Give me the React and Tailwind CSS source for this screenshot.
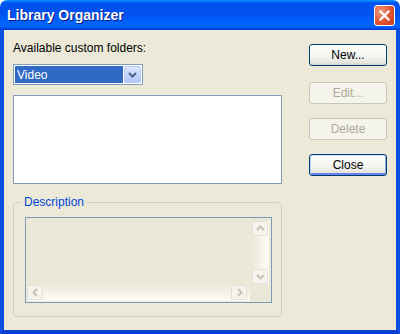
const font = "font-['Liberation_Sans',Arial,sans-serif]";

function Chevron({ dir, color = "#c5c2b2" }) {
  const paths = {
    up: "M2 7 L5.5 3.5 L9 7",
    down: "M2 4 L5.5 7.5 L9 4",
    left: "M7 2 L3.5 5.5 L7 9",
    right: "M4 2 L7.5 5.5 L4 9",
  };
  return (
    <svg width="11" height="11" viewBox="0 0 11 11">
      <path d={paths[dir]} fill="none" stroke={color} strokeWidth="2" />
    </svg>
  );
}

function ScrollButton({ dir }) {
  return (
    <div className="grid h-[15px] w-[16px] shrink-0 place-items-center rounded-[2px] border border-[#e3e1d6] bg-[#f4f3ee]">
      <Chevron dir={dir} />
    </div>
  );
}

function XpButton({ label, disabled, isDefault, className = "" }) {
  if (disabled) {
    return (
      <div
        className={`flex h-[22px] w-[78px] items-center justify-center rounded-[3px] border border-[#c9c7ba] bg-[#f5f4ea] text-[12px] text-[#aca899] ${className}`}
      >
        {label}
      </div>
    );
  }
  return (
    <div
      className={`flex h-[22px] w-[78px] items-center justify-center rounded-[3px] border border-[#003c74] bg-[linear-gradient(to_bottom,#ffffff,#f3f3ef_60%,#e6e5dd_88%,#d6d0c5)] text-[12px] text-black ${
        isDefault ? "shadow-[inset_0_1px_0_#cee7ff,inset_1px_0_0_#bcd4f6,inset_-1px_0_0_#89ade4,inset_0_-2px_0_#6982ee]" : ""
      } ${className}`}
    >
      {label}
    </div>
  );
}

export default function App() {
  return (
    <div className={`flex h-[334px] w-[400px] flex-col ${font}`}>
      {/* title bar */}
      <div className="flex h-[30px] shrink-0 items-center justify-between rounded-t-[7px] bg-[linear-gradient(to_bottom,#0997ff,#0053ee_10%,#0050ee_40%,#0066ff_85%,#005bff_92%,#003dd7_97%,#003dd7)] pl-[7px] pr-[5px]">
        <span className="mt-[1px] text-[14px] font-bold text-white [text-shadow:1px_1px_0_#0a1883]">
          Library Organizer
        </span>
        <div className="grid h-[21px] w-[21px] place-items-center rounded-[3px] border border-white bg-[radial-gradient(circle_at_30%_30%,#f09a83,#e0552f_55%,#c23c1c)]">
          <svg width="11" height="11" viewBox="0 0 11 11">
            <path d="M1.5 1.5 L9.5 9.5 M9.5 1.5 L1.5 9.5" stroke="white" strokeWidth="2.2" strokeLinecap="square" />
          </svg>
        </div>
      </div>

      {/* client */}
      <div className="flex flex-1 border-x-4 border-b-4 border-x-[#0a50e2] border-b-[#0a3fd0] bg-[#ece9d8]">
        <div className="ml-[9px] flex w-[269px] flex-col pt-[11px]">
          <div className="h-[14px] text-[12px] leading-[14px] text-black">Available custom folders:</div>

          <div className="mt-[9px] flex h-[21px] w-[130px] border border-[#7f9db9] bg-white p-[1px]">
            <div className="flex flex-1 items-center bg-[#316ac5] pl-[2px] text-[12px] text-white">Video</div>
            <div className="ml-[1px] grid w-[17px] place-items-center rounded-[2px] border border-[#b6c9f5] bg-[linear-gradient(to_bottom,#dde7fe,#c1d3fb_60%,#b1c6f8)]">
              <Chevron dir="down" color="#4d6185" />
            </div>
          </div>

          <div className="mt-[10px] h-[89px] border border-[#7f9db9] bg-white" />

          <div className="relative mt-[18px] h-[115px] rounded-[4px] border border-[#d0d0bf]">
            <span className="absolute left-[8px] top-[-8px] bg-[#ece9d8] px-[2px] text-[12px] leading-[14px] text-[#0046d5]">
              Description
            </span>
            <div className="ml-[11px] mt-[14px] flex h-[86px] w-[247px] flex-col border border-[#7f9db9] bg-[#ebe8d7] pb-[1px] pl-[1px] pr-[2px] pt-[3px]">
              <div className="flex flex-1">
                <div className="flex-1" />
                <div className="flex w-[17px] flex-col bg-[linear-gradient(to_right,#ebe8d6,#fdfdfa)]">
                  <ScrollButton dir="up" />
                  <div className="flex-1" />
                  <ScrollButton dir="down" />
                </div>
              </div>
              <div className="flex h-[17px]">
                <div className="flex flex-1 items-center bg-[linear-gradient(to_bottom,#ebe8d6,#fdfdfa)] pr-[3px]">
                  <ScrollButton dir="left" />
                  <div className="flex-1" />
                  <ScrollButton dir="right" />
                </div>
                <div className="w-[19px]" />
              </div>
            </div>
          </div>
        </div>

        <div className="ml-[27px] flex flex-col">
          <XpButton label="New..." className="mt-[14px]" />
          <XpButton label="Edit..." disabled className="mt-[16px]" />
          <XpButton label="Delete" disabled className="mt-[14px]" />
          <XpButton label="Close" isDefault className="mt-[14px]" />
        </div>
      </div>
    </div>
  );
}
